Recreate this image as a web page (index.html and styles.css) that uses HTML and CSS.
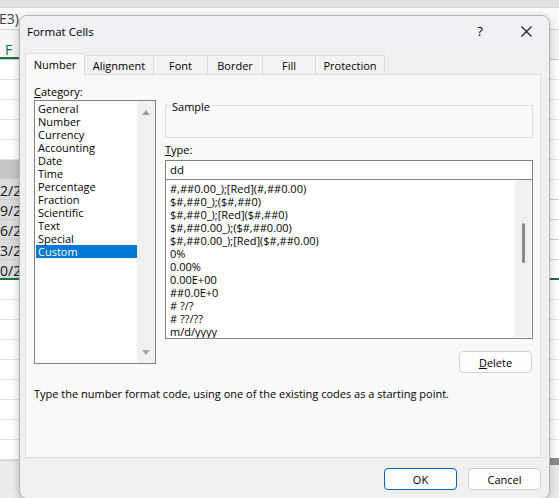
FILE: index.html
```html
<!DOCTYPE html>
<html>
<head>
<meta charset="utf-8">
<link rel="stylesheet" href="styles.css">
</head>
<body>
<div class="sheet">
  <div class="s-top"></div>
  <div class="s-formula"><span>E3)</span></div>
  <div class="s-colhead"><span class="s-col">F</span></div>
  <div class="s-rows">
    <div class="s-row"></div>
    <div class="s-row"></div>
    <div class="s-row"></div>
    <div class="s-row"></div>
    <div class="s-row"></div>
    <div class="s-row hdr"></div>
    <div class="s-row data"><span>2/2</span></div>
    <div class="s-row data"><span>9/2</span></div>
    <div class="s-row data"><span>6/2</span></div>
    <div class="s-row data"><span>3/2</span></div>
    <div class="s-row data last"><span>0/2</span></div>
    <div class="s-row"></div>
    <div class="s-row"></div>
    <div class="s-row"></div>
    <div class="s-row"></div>
    <div class="s-row"></div>
    <div class="s-row"></div>
    <div class="s-row"></div>
    <div class="s-row"></div>
    <div class="s-row"></div>
  </div>
  <div class="s-bottom"><div class="s-scroll"></div></div>

  <div class="dialog">
    <div class="titlebar">
      <span class="title">Format Cells</span>
      <span class="tbtn help">?</span>
      <span class="tbtn close"><svg width="11" height="11" viewBox="0 0 11 11"><path d="M0.5 0.5L10.5 10.5M10.5 0.5L0.5 10.5" stroke="#1a1a1a" stroke-width="1.1" fill="none"/></svg></span>
    </div>
    <div class="body">
      <div class="tabs">
        <div class="tab sel w60">Number</div>
        <div class="tab w69">Alignment</div>
        <div class="tab w54">Font</div>
        <div class="tab w55">Border</div>
        <div class="tab w53">Fill</div>
        <div class="tab w69">Protection</div>
      </div>
      <div class="panel">
        <div class="cols">
          <div class="leftcol">
            <div class="lbl"><u>C</u>ategory:</div>
            <div class="catlist">
              <div class="items">
                <div class="item">General</div>
                <div class="item">Number</div>
                <div class="item">Currency</div>
                <div class="item">Accounting</div>
                <div class="item">Date</div>
                <div class="item">Time</div>
                <div class="item">Percentage</div>
                <div class="item">Fraction</div>
                <div class="item">Scientific</div>
                <div class="item">Text</div>
                <div class="item">Special</div>
                <div class="item selitem">Custom</div>
              </div>
              <div class="vscroll">
                <span class="arrow up"></span>
                <span class="arrow down"></span>
              </div>
            </div>
          </div>
          <div class="rightcol">
            <div class="sample"><span class="legend">Sample</span></div>
            <div class="lbl typelbl"><u>T</u>ype:</div>
            <div class="typeinput">dd</div>
            <div class="fmtlist">
              <div class="items fitems">
                <div class="item">#,##0.00_);[Red](#,##0.00)</div>
                <div class="item">$#,##0_);($#,##0)</div>
                <div class="item">$#,##0_);[Red]($#,##0)</div>
                <div class="item">$#,##0.00_);($#,##0.00)</div>
                <div class="item">$#,##0.00_);[Red]($#,##0.00)</div>
                <div class="item">0%</div>
                <div class="item">0.00%</div>
                <div class="item">0.00E+00</div>
                <div class="item">##0.0E+0</div>
                <div class="item"># ?/?</div>
                <div class="item"># ??/??</div>
                <div class="item">m/d/yyyy</div>
              </div>
              <div class="thinscroll"><span class="thumb"></span></div>
            </div>
            <div class="btn delete"><u>D</u>elete</div>
          </div>
        </div>
        <div class="desc">Type the number format code, using one of the existing codes as a starting point.</div>
      </div>
      <div class="footer">
        <div class="btn ok">OK</div>
        <div class="btn">Cancel</div>
      </div>
    </div>
  </div>
</div>
</body>
</html>
```

FILE: styles.css
```css
* { box-sizing: border-box; }
html, body { margin: 0; padding: 0; }
body { width: 559px; height: 498px; overflow: hidden; background: #fff; }

.sheet {
  position: relative;
  width: 559px;
  height: 498px;
  font-family: "Open Sans", "Noto Sans", sans-serif;
  display: flex;
  flex-direction: column;
}
.s-top { height: 8px; background: #e1e1e1; border-bottom: 1px solid #d2d2d2; }
.s-formula { height: 22px; background: #fbfbfb; border-bottom: 1px solid #d6d6d6; font-size: 14px; color: #3a3a3a; line-height: 22px; }
.s-formula span { margin-left: -1px; }
.s-colhead { height: 30px; background: #f5f5f5; display: flex; align-items: flex-end; border-bottom: 1px solid #c8c8c8; }
.s-col { width: 20px; height: 21px; line-height: 21px; padding-top: 1px; font-size: 14px; color: #1e6c41; padding-left: 5px; border-bottom: 2px solid #1e7145; }
.s-rows { display: flex; flex-direction: column; }
.s-row { height: 20px; border-bottom: 1px solid #e1e1e1; font-size: 14px; line-height: 21px; color: #111; }
.s-row.hdr { background: linear-gradient(90deg, #c6c6c6 0 30px, #fff 30px); }
.s-row.data { background: linear-gradient(90deg, #dcdcdc 0 30px, #fff 30px); border-bottom-color: #cfcfcf; }
.s-row.last { border-bottom: 2px solid #1e7145; }
.s-bottom { flex: 1; background: #ececec; border-top: 1px solid #cfcfcf; display: flex; justify-content: flex-end; }
.s-scroll { width: 10px; height: 7px; margin-top: -3px; background: #8a8a8a; }

/* dialog */
.dialog {
  position: absolute;
  left: 19px;
  top: 15px;
  width: 531px;
  height: 484px;
  border: 1px solid #b4b4b4;
  border-radius: 8px;
  background: #f0f0f0;
  overflow: hidden;
  box-shadow: 0 2px 10px rgba(0,0,0,0.22);
  display: flex;
  flex-direction: column;
  font-family: "Open Sans", "Noto Sans", sans-serif;
  font-size: 11px;
  color: #000;
}
.titlebar {
  height: 30px;
  background: #eff1f6;
  display: flex;
  align-items: center;
  padding-left: 7px;
}
.title { font-size: 11.5px; flex: 1; }
.tbtn { width: 46px; height: 30px; display: flex; align-items: center; justify-content: center; }
.help { font-size: 13px; }
.close svg { display: block; }

.body { flex: 1; padding: 7px 8px 0 5px; display: flex; flex-direction: column; }
.tabs { display: flex; align-items: flex-end; height: 21px; position: relative; z-index: 1; }
.tab {
  height: 19px;
  background: #f3f3f3;
  border: 1px solid #dcdcdc;
  border-bottom: none;
  border-left: none;
  display: flex;
  align-items: center;
  justify-content: center;
  line-height: 1;
  padding-top: 1px;
}
.tab.sel {
  height: 22px;
  margin-bottom: -1px;
  background: #f9f9f9;
  border-left: 1px solid #dcdcdc;
  padding-top: 1px;
  padding-bottom: 1px;
}
.w60 { width: 60px; }
.w69 { width: 69px; }
.w54 { width: 54px; }
.w55 { width: 55px; }
.w53 { width: 53px; }

.panel {
  height: 384px;
  background: #f9f9f9;
  border: 1px solid #dcdcdc;
  padding: 10px 0 0 8px;
}
.cols { display: grid; grid-template-columns: 122px 368px; column-gap: 9px; }
.lbl { height: 15px; line-height: 14px; }
.leftcol { display: flex; flex-direction: column; }
.catlist {
  height: 264px;
  border: 1px solid #838383;
  background: #fff;
  display: flex;
}
.items { flex: 1; padding-top: 1px; padding-left: 1px; }
.item { height: 13px; line-height: 13px; padding-left: 2px; white-space: nowrap; }
.selitem { background: #0078d7; color: #fff; }
.vscroll {
  width: 18px;
  background: #f0f0f0;
  display: flex;
  flex-direction: column;
  justify-content: space-between;
  align-items: center;
  padding: 9px 0 8px;
}
.arrow { width: 0; height: 0; border-left: 4px solid transparent; border-right: 4px solid transparent; }
.arrow.up { border-bottom: 5px solid #a3a3a3; }
.arrow.down { border-top: 5px solid #a3a3a3; }

.rightcol { display: flex; flex-direction: column; }
.sample {
  margin-top: 20px;
  height: 33px;
  border: 1px solid #dcdcdc;
}
.legend {
  display: inline-block;
  margin: -6px 0 0 4px;
  padding: 0 2px;
  background: #f9f9f9;
  line-height: 14px;
  vertical-align: top;
}
.typelbl { margin-top: 5px; margin-bottom: 2px; }
.typeinput {
  height: 20px;
  border: 1px solid #838383;
  background: #fff;
  padding-left: 4px;
  line-height: 18px;
  font-size: 11.5px;
}
.fmtlist {
  margin-top: -1px;
  height: 160px;
  border: 1px solid #838383;
  background: #fff;
  display: flex;
  padding: 1px;
  overflow: hidden;
}
.fitems { padding-top: 1px; padding-left: 1px; }
.thinscroll {
  width: 16px;
  background: #f0f0f0;
  position: relative;
}
.thumb {
  position: absolute;
  left: 7px;
  top: 42px;
  width: 3px;
  height: 40px;
  border-radius: 2px;
  background: #8a8a8a;
}
.btn {
  width: 73px;
  height: 22px;
  border: 1px solid #d0d0d0;
  border-radius: 4px;
  background: #fdfdfd;
  display: flex;
  align-items: center;
  justify-content: center;
  line-height: 1;
}
.delete { margin-top: 12px; align-self: flex-end; margin-right: 1px; }
.desc { margin-top: 13px; line-height: 15px; }

.footer {
  display: flex;
  justify-content: flex-end;
  gap: 11px;
  padding-top: 10px;
}
.ok { border-color: #0067c0; }
```
